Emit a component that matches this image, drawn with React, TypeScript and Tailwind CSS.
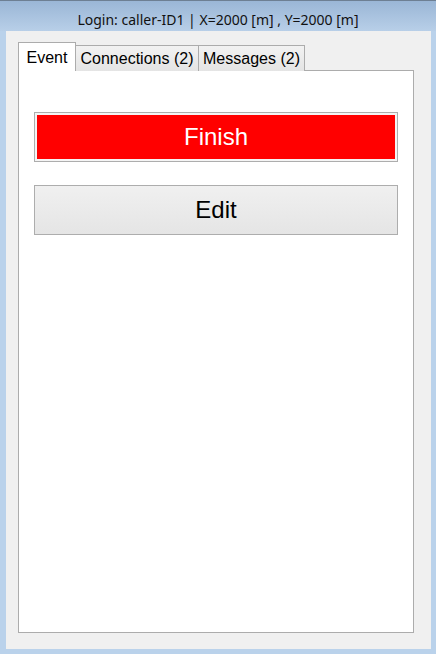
import React from "react";

export default function App() {
  return (
    <div className="w-[436px] h-[654px] flex flex-col bg-[#bad2eb] overflow-hidden">
      <div className="h-[1px] bg-[#6d7f93]" />
      <div
        className="h-[30px] flex items-center justify-center bg-gradient-to-b from-[#9ab6d6] to-[#b8cfe8] text-[14px] text-[#111] pt-[6px]"
        style={{ fontFamily: '"Noto Sans", "Open Sans", sans-serif' }}
      >
        Login: caller-ID1 | X=2000 [m] , Y=2000 [m]
      </div>
      <div className="flex-1 flex pl-[6px] pr-[5px] pb-[5px]">
        <div
          className="flex-1 bg-[#f0f0f0] flex flex-col pt-[11px] pl-[12px] pr-[17px] pb-[16px]"
          style={{ fontFamily: '"Liberation Sans", Arial, sans-serif' }}
        >
          <div className="flex items-end h-[29px] relative z-10">
            <div className="w-[58px] h-[29px] bg-white border border-b-0 border-[#acacac] flex items-start justify-center pt-[3px] text-[16px] text-black">
              Event
            </div>
            <div className="w-[123px] h-[26px] bg-gradient-to-b from-[#f2f2f2] to-[#e4e4e4] border border-l-0 border-b-0 border-[#acacac] flex items-center justify-center text-[16px] text-black">
              Connections (2)
            </div>
            <div className="w-[106px] h-[26px] bg-gradient-to-b from-[#f2f2f2] to-[#e4e4e4] border border-l-0 border-b-0 border-[#acacac] flex items-center justify-center text-[16px] text-black">
              Messages (2)
            </div>
          </div>
          <div className="flex-1 bg-white border border-[#acacac] -mt-[1px] flex flex-col px-[15px] pt-[41px] gap-[23px]">
            <div className="h-[50px] border border-[#adadad] p-[2px] bg-[#f4f4f4]">
              <div className="h-full bg-[#ff0000] flex items-center justify-center text-[24px] text-white">
                Finish
              </div>
            </div>
            <div className="h-[50px] border border-[#adadad] bg-gradient-to-b from-[#f0f0f0] to-[#e5e5e5] flex items-center justify-center text-[24px] text-black">
              Edit
            </div>
          </div>
        </div>
      </div>
    </div>
  );
}
